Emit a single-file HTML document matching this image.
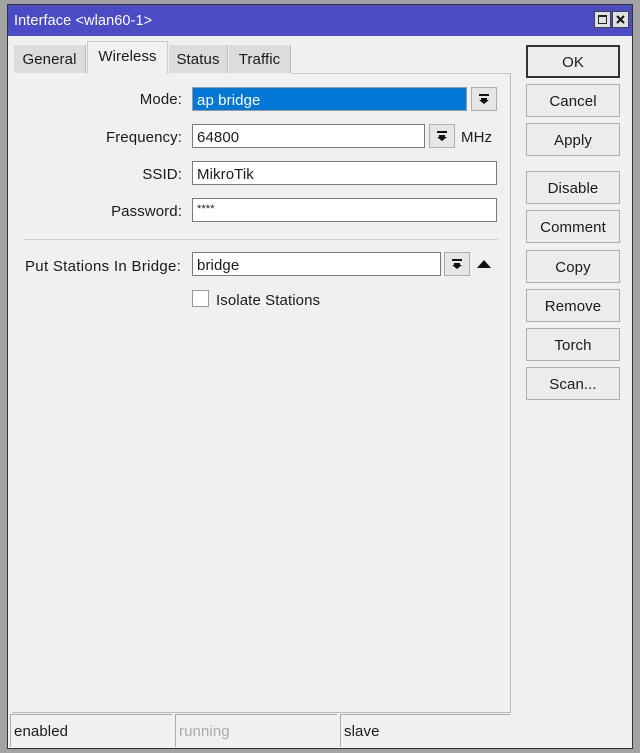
<!DOCTYPE html><html><head><style>
*{box-sizing:border-box;margin:0;padding:0}
body{width:640px;height:753px;background:#a3a3a3;font-family:"Liberation Sans",sans-serif;font-size:15px;color:#1a1a1a;position:relative;overflow:hidden;letter-spacing:0.1px}
.a{position:absolute}
#win{left:7px;top:4px;width:626px;height:745px;background:#f0f0f0;border:1px solid #333}
#title{left:8px;top:5px;width:624px;height:31px;background:#4b4bc6;color:#fff;font-size:14.5px;padding:8px 0 0 6px}
.tb{width:17px;height:17px;background:#e0e0e0;border:1px solid #444;top:11px}
.tab{background:#dcdcdc;top:45px;height:28px;padding:6px 0 0;text-align:center;border-right:1px solid #bbb}
#panel{left:12px;top:73px;width:499px;height:640px;border:1px solid #bcbcbc;border-top:none;border-left:none}
.btn{left:526px;width:94px;height:33px;border:1px solid #adadad;background:#ececec;text-align:center;padding-top:8px}
.lbl{text-align:right;width:170px;left:12px}
.in{background:#fff;border:1px solid #7a7a7a;height:24px;padding:4px 0 0 4px}
.dd{width:26px;height:24px;border:1px solid #adadad;background:#e6e6e6}
.dd svg{position:absolute;left:7px;top:6px}
.sb{top:714px;height:33px;border-top:1px solid #aaa;border-left:1px solid #aaa;padding:8px 0 0 3px}
</style></head><body>
<div id="win" class="a"></div>
<div id="title" class="a">Interface &lt;wlan60-1&gt;</div>
<div class="a tb" style="left:594px"><div class="a" style="left:3px;top:3px;width:9px;height:9px;border:1px solid #222;border-top-width:2px"></div></div>
<div class="a tb" style="left:612px"><svg class="a" style="left:3px;top:3px" width="9" height="9"><path d="M1 1L8 8M8 1L1 8" stroke="#111" stroke-width="2"/></svg></div>
<div class="a tab" style="left:14px;width:72px">General</div>
<div class="a tab" style="left:87px;width:81px;top:41px;height:33px;background:#f0f0f0;border:1px solid #ccc;border-bottom:none">Wireless</div>
<div class="a tab" style="left:169px;width:59px">Status</div>
<div class="a tab" style="left:229px;width:62px">Traffic</div>
<div class="a" style="left:291px;top:73px;width:220px;height:1px;background:#ccc"></div>
<div id="panel" class="a"></div>
<div class="a btn" style="top:45px;border:2px solid #333;padding-top:7px">OK</div>
<div class="a btn" style="top:84px">Cancel</div>
<div class="a btn" style="top:123px">Apply</div>
<div class="a btn" style="top:171px">Disable</div>
<div class="a btn" style="top:210px">Comment</div>
<div class="a btn" style="top:250px">Copy</div>
<div class="a btn" style="top:289px">Remove</div>
<div class="a btn" style="top:328px">Torch</div>
<div class="a btn" style="top:367px">Scan...</div>

<div class="a lbl" style="top:91px">Mode:</div>
<div class="a in" style="left:192px;top:87px;width:275px;background:#0078d7;color:#fff;border-color:#999">ap bridge</div>
<div class="a dd" style="left:471px;top:87px"><svg width="10" height="10"><path d="M0 1H10" stroke="#111" stroke-width="2"/><path d="M2 4H8V6H10L5 10L0 6H2Z" fill="#111"/></svg></div>
<div class="a lbl" style="top:129px">Frequency:</div>
<div class="a in" style="left:192px;top:124px;width:233px">64800</div>
<div class="a dd" style="left:429px;top:124px"><svg width="10" height="10"><path d="M0 1H10" stroke="#111" stroke-width="2"/><path d="M2 4H8V6H10L5 10L0 6H2Z" fill="#111"/></svg></div>
<div class="a" style="left:461px;top:129px">MHz</div>
<div class="a lbl" style="top:166px">SSID:</div>
<div class="a in" style="left:192px;top:161px;width:305px">MikroTik</div>
<div class="a lbl" style="top:203px">Password:</div>
<div class="a in" style="left:192px;top:198px;width:305px;font-size:11px">****</div>
<div class="a" style="left:24px;top:239px;width:474px;height:1px;background:#d0d0d0"></div>
<div class="a" style="left:25px;top:258px;letter-spacing:0.3px">Put Stations In Bridge:</div>
<div class="a in" style="left:192px;top:252px;width:249px">bridge</div>
<div class="a dd" style="left:444px;top:252px"><svg width="10" height="10"><path d="M0 1H10" stroke="#111" stroke-width="2"/><path d="M2 4H8V6H10L5 10L0 6H2Z" fill="#111"/></svg></div>
<svg class="a" style="left:477px;top:260px" width="14" height="8"><path d="M0 8L7 0L14 8Z" fill="#111"/></svg>
<div class="a" style="left:192px;top:290px;width:17px;height:17px;background:#fff;border:1px solid #999"></div>
<div class="a" style="left:216px;top:292px">Isolate Stations</div>

<div class="a sb" style="left:10px;width:162px">enabled</div>
<div class="a sb" style="left:175px;width:162px;color:#aaa">running</div>
<div class="a sb" style="left:340px;width:170px">slave</div>
</body></html>
